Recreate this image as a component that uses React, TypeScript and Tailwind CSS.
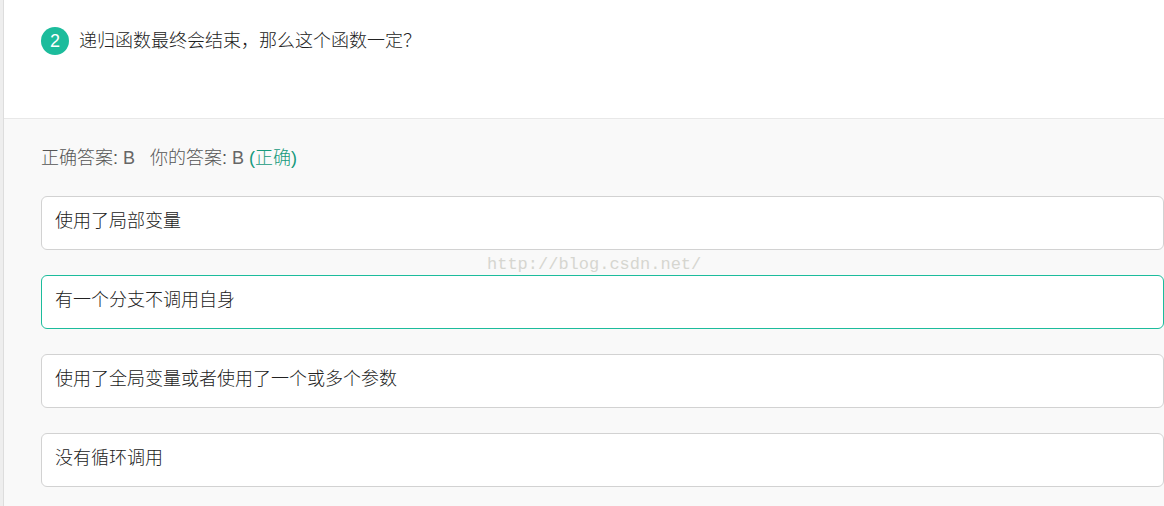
import React from 'react';
import clsx from 'clsx';

interface Option {
  id: string;
  text: string;
}

const options: Option[] = [
  { id: 'A', text: '使用了局部变量' },
  { id: 'B', text: '有一个分支不调用自身' },
  { id: 'C', text: '使用了全局变量或者使用了一个或多个参数' },
  { id: 'D', text: '没有循环调用' },
];

const correctAnswer = 'B';
const userAnswer = 'B';

const QuestionHeader: React.FC<{ index: number; title: string }> = ({ index, title }) => (
  <header className="flex items-start gap-2.5 border-b border-[#e8e8e8] bg-white pt-[27px] pb-[63px] pl-[37px]">
    <span className="flex size-7 shrink-0 items-center justify-center rounded-full bg-[#1cbc9c] text-lg text-white">
      {index}
    </span>
    <h1 className="text-lg leading-7 font-light text-[#222]">{title}</h1>
  </header>
);

const AnswerSummary: React.FC = () => (
  <p className="flex text-lg leading-7 font-light text-[#555]">
    <span className="mr-[15px]">
      正确答案: <span className="font-normal text-[#666]">{correctAnswer}</span>
    </span>
    <span>
      你的答案: <span className="font-normal text-[#666]">{userAnswer}</span>{' '}
      <span className="text-[#159a7c]">(正确)</span>
    </span>
  </p>
);

const OptionItem: React.FC<{ option: Option }> = ({ option }) => (
  <li
    className={clsx(
      'rounded-md border bg-white px-[13px] pt-2.5 pb-3.5 text-lg leading-7 font-light text-[#222]',
      option.id === correctAnswer ? 'border-[#1cbc9c]' : 'border-[#d2d2d2]'
    )}
  >
    {option.text}
  </li>
);

export default function App() {
  return (
    <div
      lang="zh-CN"
      className="flex min-h-screen bg-[#eee] pl-[3px] font-['Liberation_Sans','Noto_Sans_CJK_SC',sans-serif]"
    >
      <main className="relative flex flex-1 flex-col border-l border-[#ddd] bg-[#f9f9f9]">
        <QuestionHeader index={2} title="递归函数最终会结束，那么这个函数一定？" />

        <section className="pt-[25px] pb-[19px] pl-[37px]">
          <AnswerSummary />
          <ul className="mt-6 flex flex-col gap-[25px]">
            {options.map((option) => (
              <OptionItem key={option.id} option={option} />
            ))}
          </ul>
        </section>

        {/* Marca d'água */}
        <span className="pointer-events-none absolute top-[253px] left-[483px] font-['Liberation_Mono',monospace] text-[17px] leading-6 text-[#d6d6d0]">
          http://blog.csdn.net/
        </span>
      </main>
    </div>
  );
}
